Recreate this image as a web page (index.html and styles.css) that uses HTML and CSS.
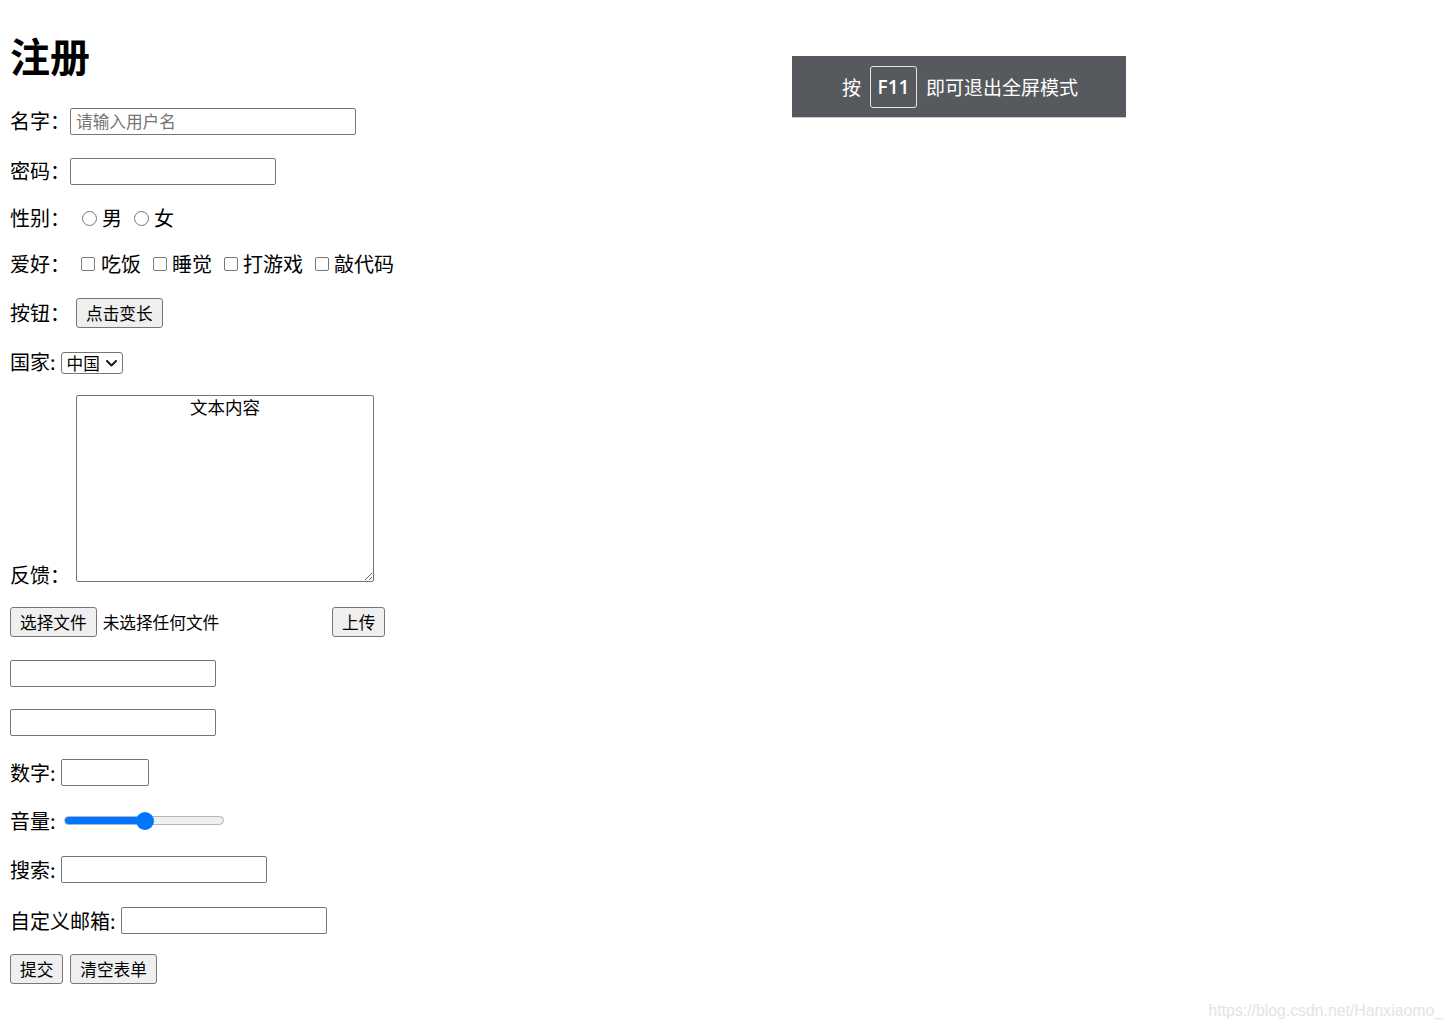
FILE: index.html
```html
<!DOCTYPE html>
<html lang="zh-CN">
<head>
<meta charset="utf-8">
<title>注册</title>
<link rel="stylesheet" href="styles.css">
</head>
<body>
<h1 class="title">注册</h1>
<form class="form">
  <div class="row h30"><label class="lbl">名字：</label><input class="field wide" type="text" placeholder="请输入用户名"></div>
  <div class="row h30"><label class="lbl">密码：</label><input class="field" type="password"></div>
  <div class="row h24">
    <span class="lbl">性别：</span>
    <label class="opt first-radio"><input type="radio" name="sex" class="radio"><span class="opt-text">男</span></label>
    <label class="opt next-radio"><input type="radio" name="sex" class="radio"><span class="opt-text">女</span></label>
  </div>
  <div class="row h28">
    <span class="lbl">爱好：</span>
    <label class="opt first-check"><input type="checkbox" class="check"><span class="opt-text">吃饭</span></label>
    <label class="opt next-check"><input type="checkbox" class="check"><span class="opt-text">睡觉</span></label>
    <label class="opt next-check"><input type="checkbox" class="check"><span class="opt-text">打游戏</span></label>
    <label class="opt next-check"><input type="checkbox" class="check"><span class="opt-text">敲代码</span></label>
  </div>
  <div class="row h30"><span class="lbl">按钮：</span><button type="button" class="btn gap">点击变长</button></div>
  <div class="row h27">
    <label class="lbl">国家:</label>
    <span class="select-wrap">
      <select class="select"><option>中国</option><option>美国</option></select>
      <svg class="chevron" width="11" height="7" viewBox="0 0 11 7" aria-hidden="true"><polyline points="1,1 5.5,5.5 10,1" fill="none" stroke="#1a1a1a" stroke-width="2" stroke-linecap="round" stroke-linejoin="round"/></svg>
    </span>
  </div>
  <div class="row bottom"><label class="lbl low">反馈：</label><textarea class="area">文本内容</textarea></div>
  <div class="row h30">
    <div class="file"><button type="button" class="btn">选择文件</button><span class="file-text">未选择任何文件</span></div>
    <button type="button" class="btn upload">上传</button>
  </div>
  <div class="row h32"><input class="field" type="email"></div>
  <div class="row h27"><input class="field" type="url"></div>
  <div class="row h33"><label class="lbl">数字:</label><input class="field num" type="text"></div>
  <div class="row h23"><label class="lbl">音量:</label><input class="range" type="range" min="0" max="100" value="51"></div>
  <div class="row h35"><label class="lbl">搜索:</label><input class="field gap" type="search"></div>
  <div class="row h27"><label class="lbl">自定义邮箱:</label><input class="field gap" type="text"></div>
  <div class="row h30"><button type="submit" class="btn">提交</button><button type="reset" class="btn reset">清空表单</button></div>
</form>

<div class="toast"><span>按</span><span class="key">F11</span><span>即可退出全屏模式</span></div>
<div class="watermark">https://blog.csdn.net/Hanxiaomo_</div>
</body>
</html>
```

FILE: styles.css
```css
html, body {
  height: 100%;
}
body {
  margin: 0;
  padding: 0 10px;
  box-sizing: border-box;
  font-family: "Noto Sans CJK SC", "Microsoft YaHei", sans-serif;
  font-size: 20px;
  color: #000;
  background: #fff;
  overflow: hidden;
}
.title {
  margin: 31px 0 0;
  font-size: 40px;
  line-height: 48px;
  height: 48px;
  font-weight: bold;
}
.form {
  display: flex;
  flex-direction: column;
  gap: 20px;
  margin-top: 27px;
}
.row {
  display: flex;
  align-items: center;
  line-height: 26px;
  white-space: nowrap;
}
.h23 { height: 23px; }
.h24 { height: 24px; }
.h27 { height: 27px; }
.h28 { height: 28px; }
.h30 { height: 30px; }
.h32 { height: 32px; }
.h33 { height: 33px; }
.h35 { height: 35px; }
.bottom { align-items: flex-end; }
.lbl { display: inline-block; }
.low { line-height: 24px; }

.field {
  box-sizing: border-box;
  width: 206px;
  height: 27px;
  margin: 0;
  padding: 1px 5px;
  border: 1px solid #767676;
  border-radius: 2px;
  font-family: "Noto Sans CJK SC", sans-serif;
  font-size: 16.67px;
  background: #fff;
  outline: none;
  -webkit-appearance: none;
  appearance: none;
}
.field::placeholder { color: #757575; }
.field.wide { width: 286px; }
.field.num { width: 88px; margin-left: 5px; }
.field.gap { margin-left: 5px; }

.opt {
  display: inline-flex;
  align-items: center;
}
.opt-text { margin-left: 5px; }
.radio {
  -webkit-appearance: none;
  appearance: none;
  box-sizing: border-box;
  width: 15px;
  height: 15px;
  margin: 0;
  border: 1px solid #767676;
  border-radius: 50%;
  background: #fff;
}
.first-radio { margin-left: 12px; }
.next-radio { margin-left: 12px; }
.check {
  -webkit-appearance: none;
  appearance: none;
  box-sizing: border-box;
  width: 14px;
  height: 14px;
  margin: 0;
  border: 1px solid #767676;
  border-radius: 2px;
  background: #fff;
}
.first-check { margin-left: 11px; }
.next-check { margin-left: 12px; }
.first-check .opt-text { margin-left: 6px; }

.btn {
  box-sizing: border-box;
  height: 30px;
  margin: 0;
  padding: 0 9px;
  border: 1px solid #767676;
  border-radius: 3px;
  background: #efefef;
  color: #000;
  font-family: "Noto Sans CJK SC", sans-serif;
  font-size: 16.67px;
  line-height: 26px;
}
.btn.gap { margin-left: 6px; }
.btn.reset { margin-left: 7px; }
.btn.upload { margin-left: 6px; }

.select-wrap {
  position: relative;
  display: inline-flex;
  margin: 3px 0 0 5px;
}
.select {
  -webkit-appearance: none;
  appearance: none;
  box-sizing: border-box;
  width: 62px;
  height: 22px;
  margin: 0;
  padding: 0 0 0 5px;
  border: 1px solid #767676;
  border-radius: 3px;
  font-family: "Noto Sans CJK SC", sans-serif;
  font-size: 16.67px;
  line-height: 20px;
  background: #fff;
  color: #000;
  outline: none;
}
.chevron {
  position: absolute;
  right: 6px;
  top: 8px;
  pointer-events: none;
}

.area {
  box-sizing: border-box;
  width: 298px;
  height: 187px;
  margin: 0 0 5px 6px;
  padding: 0 2px;
  border: 1px solid #767676;
  border-radius: 2px;
  font-family: "Noto Sans CJK SC", monospace;
  font-size: 17.5px;
  line-height: 22px;
  text-align: center;
  outline: none;
}

.file {
  display: flex;
  align-items: center;
  width: 316px;
}
.file-text {
  margin-left: 6px;
  font-size: 16.67px;
}

.range {
  -webkit-appearance: none;
  appearance: none;
  box-sizing: border-box;
  width: 160px;
  height: 9px;
  margin: 0 0 0 8px;
  padding: 0;
  border: 1px solid #b5b5b5;
  border-radius: 5px;
  background-color: #efefef;
  background-image: linear-gradient(#0075ff, #0075ff);
  background-repeat: no-repeat;
  background-size: 52% 100%;
  background-origin: border-box;
  background-clip: border-box;
  outline: none;
}
.range::-webkit-slider-runnable-track {
  height: 7px;
  border: none;
}
.range::-webkit-slider-thumb {
  -webkit-appearance: none;
  width: 18px;
  height: 18px;
  margin-top: -5.5px;
  border-radius: 50%;
  background: #0075ff;
  border: none;
}

.toast {
  position: absolute;
  left: 792px;
  top: 56px;
  width: 334px;
  height: 62px;
  box-sizing: border-box;
  display: flex;
  align-items: center;
  justify-content: center;
  gap: 9px;
  padding-left: 2px;
  background: #56595d;
  border-bottom: 1px solid #c9cacb;
  color: #fff;
  font-size: 19px;
}
.key {
  box-sizing: border-box;
  width: 47px;
  height: 42px;
  display: flex;
  align-items: center;
  justify-content: center;
  border: 1px solid rgba(255, 255, 255, 0.85);
  border-radius: 3px;
  font-family: "Open Sans", sans-serif;
  font-weight: 600;
  font-size: 19px;
}

.watermark {
  position: absolute;
  right: 10px;
  bottom: 9px;
  font-family: "Liberation Sans", Arial, sans-serif;
  font-size: 15.8px;
  color: #e4e4e4;
}
```
